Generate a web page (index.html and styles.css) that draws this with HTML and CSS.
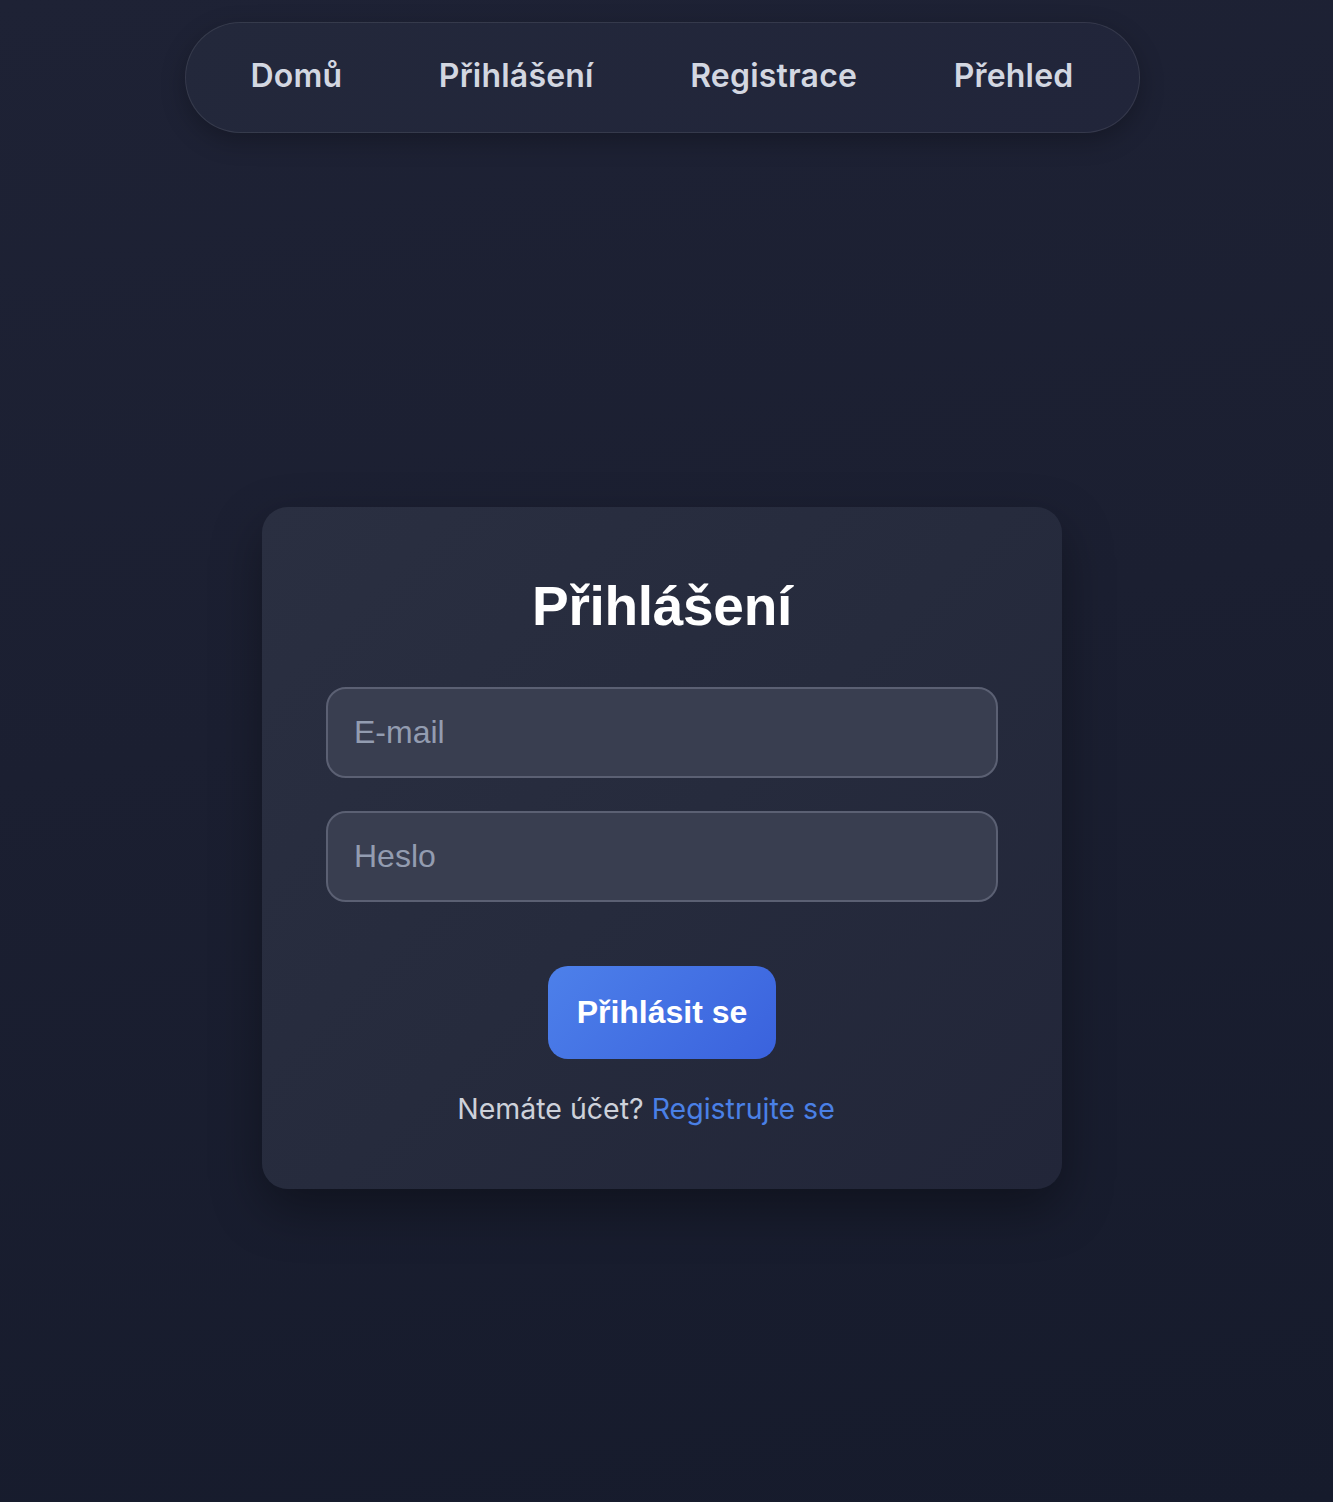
FILE: index.html
```html
<!DOCTYPE html>
<html lang="cs">
<head>
<meta charset="utf-8">
<title>Přihlášení</title>
<link rel="stylesheet" href="styles.css">
</head>
<body>
<header class="topbar">
  <nav class="nav">
    <a class="nav-link" href="#">Domů</a>
    <a class="nav-link" href="#">Přihlášení</a>
    <a class="nav-link" href="#">Registrace</a>
    <a class="nav-link" href="#">Přehled</a>
  </nav>
</header>
<main class="main">
  <section class="card">
    <h1 class="card-title">Přihlášení</h1>
    <form class="form">
      <input class="field" type="email" placeholder="E-mail">
      <input class="field" type="password" placeholder="Heslo">
      <button class="btn" type="button">Přihlásit se</button>
    </form>
    <p class="hint">Nemáte účet? <a class="hint-link" href="#">Registrujte se</a></p>
  </section>
</main>
</body>
</html>
```

FILE: styles.css
```css
* { box-sizing: border-box; }
html, body { height: 100%; }
body {
  margin: 0;
  padding-right: 9px;
  min-height: 1502px;
  background: linear-gradient(170deg, #1e2235 0%, #1b1f31 45%, #161b2c 100%);
  font-family: Inter, "Noto Sans", sans-serif;
  color: #d4d8e2;
}
.topbar {
  display: flex;
  justify-content: center;
  padding-top: 22px;
}
.nav {
  width: 955px;
  height: 111px;
  display: flex;
  align-items: center;
  justify-content: space-between;
  padding: 0 65px 4px 65px;
  border: 1.5px solid rgba(255,255,255,0.09);
  border-radius: 56px;
  background: linear-gradient(135deg, #23283b 0%, #21253a 100%);
  box-shadow: 0 8px 24px rgba(0,0,0,0.25);
}
.nav-link {
  font-family: Inter, sans-serif;
  font-weight: 600;
  font-size: 32px;
  color: #d3d7e1;
  text-decoration: none;
  letter-spacing: 0.2px;
}
.main {
  display: flex;
  justify-content: center;
  padding-top: 374px;
}
.card {
  width: 800px;
  padding: 66px 64px 59px;
  border-radius: 26px;
  background: linear-gradient(135deg, #2a2f41 0%, #262b3d 50%, #222639 100%);
  box-shadow: 0 20px 50px rgba(0,0,0,0.35);
  text-align: center;
}
.card-title {
  margin: 0 0 47px;
  font-family: "Liberation Sans", Arial, sans-serif;
  font-weight: 700;
  font-size: 55px;
  line-height: 67px;
  letter-spacing: -0.3px;
  color: #ffffff;
}
.form {
  display: flex;
  flex-direction: column;
  align-items: center;
  gap: 33px;
}
.field {
  width: 100%;
  height: 91px;
  padding: 0 26px;
  border: 2px solid #5b6073;
  border-radius: 20px;
  background: #393e50;
  font-family: "Liberation Sans", Arial, sans-serif;
  font-size: 32px;
  color: #e6e9f0;
  outline: none;
}
.field::placeholder { color: #939cb0; }
.btn {
  margin-top: 31px;
  width: 228px;
  height: 93px;
  border: none;
  border-radius: 20px;
  background: linear-gradient(135deg, #4d80ea 0%, #3a62dd 100%);
  color: #ffffff;
  font-family: "Liberation Sans", Arial, sans-serif;
  font-weight: 700;
  font-size: 32px;
  cursor: pointer;
}
.hint {
  margin: 29px 0 0;
  padding-right: 32px;
  font-size: 28.5px;
  line-height: 42px;
  color: #cdd1da;
}
.hint-link {
  color: #4a80e6;
  text-decoration: none;
}
```
